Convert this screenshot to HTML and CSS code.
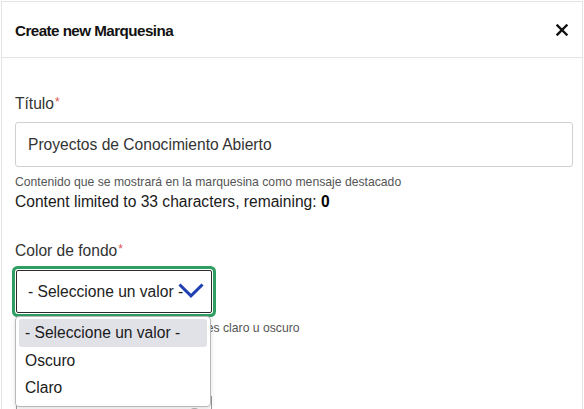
FILE: index.html
```html
<!DOCTYPE html>
<html lang="es">
<head>
<meta charset="utf-8">
<title>Create new Marquesina</title>
<link rel="stylesheet" href="styles.css">
</head>
<body>
<div class="modal">
  <header class="modal-header">
    <h2 class="modal-title">Create new Marquesina</h2>
    <button class="close" type="button" aria-label="Close">
      <svg width="12" height="12" viewBox="0 0 12 12"><path d="M1.5 1.5 L10.5 10.5 M10.5 1.5 L1.5 10.5" stroke="#111" stroke-width="2.4" stroke-linecap="square" fill="none"/></svg>
    </button>
  </header>
  <div class="modal-body">
    <div class="field">
      <label class="label">Título<span class="req">*</span></label>
      <div class="input">Proyectos de Conocimiento Abierto</div>
      <div class="help">Contenido que se mostrará en la marquesina como mensaje destacado</div>
      <div class="counter">Content limited to 33 characters, remaining: <b>0</b></div>
    </div>
    <div class="field field-gap">
      <label class="label">Color de fondo<span class="req">*</span></label>
      <div class="select-wrap">
        <div class="select focused">
          <span class="select-text">- Seleccione un valor -</span>
          <svg class="chev" width="26" height="15" viewBox="0 0 26 15"><polyline points="1.5,1.5 13,12.8 24.5,1.5" stroke="#1f3fb4" stroke-width="3" fill="none" stroke-linejoin="miter"/></svg>
        </div>
        <ul class="dropdown">
          <li class="opt active">- Seleccione un valor -</li>
          <li class="opt">Oscuro</li>
          <li class="opt">Claro</li>
        </ul>
      </div>
      <div class="help">Indique si el color de fondo elegido es claro u oscuro</div>
    </div>
    <div class="field field-gap2">
      <label class="label">Color de texto<span class="req">*</span></label>
      <div class="select">
        <span class="select-text">- Seleccione un valor -</span>
        <span class="knob"></span>
      </div>
    </div>
  </div>
</div>
</body>
</html>
```
FILE: styles.css
```css
* { box-sizing: border-box; }
html, body { margin: 0; padding: 0; background: #fff; }
body { font-family: "Liberation Sans", Arial, sans-serif; }

.modal {
  margin: 1px 0 0 1px;
  width: 582px;
  height: 408px;
  border: 1px solid #e4e4e4;
  border-bottom: none;
  overflow: hidden;
  background: #fff;
}

.modal-header {
  height: 56px;
  border-bottom: 1px solid #e4e4e4;
  display: flex;
  align-items: center;
  justify-content: space-between;
  padding: 0 13px 0 13px;
}
.modal-title {
  margin: 0;
  font-size: 15.2px;
  font-weight: bold;
  letter-spacing: -0.55px;
  color: #111;
  line-height: 20px;
  position: relative;
  top: 1px;
}
.close {
  border: none;
  background: none;
  padding: 0;
  width: 12px;
  height: 12px;
  display: flex;
  margin-right: 1px;
}

.modal-body {
  padding: 36px 9px 0 13px;
}

.label {
  display: block;
  font-size: 15.6px;
  line-height: 19px;
  color: #333;
  margin-bottom: 9px;
}
.req { color: #d9534f; font-size: 12px; vertical-align: top; margin-left: 1px; position: relative; top: -1px; }

.input {
  height: 45px;
  border: 1px solid #d0d0d0;
  border-radius: 3px;
  padding: 0 12px;
  display: flex;
  align-items: center;
  font-size: 15.6px;
  color: #333;
}
.help {
  margin-top: 7px;
  font-size: 12.2px;
  line-height: 16px;
  color: #555;
}
.counter {
  margin-top: 3px;
  font-size: 15.6px;
  line-height: 18px;
  color: #1a1a1a;
}
.counter b { color: #000; }

.field-gap { margin-top: 30px; }
.field-gap .label { margin-bottom: 10px; }
.field-gap2 { margin-top: 30px; }
.field-gap2 .label { margin-bottom: 10px; }

.select-wrap {
  position: relative;
  width: 196px;
  margin-left: 1px;
}
.select {
  position: relative;
  width: 196px;
  height: 43px;
  border: 1px solid #2b2b2b;
  border-radius: 2px;
  padding: 0 11px;
  display: flex;
  align-items: center;
  font-size: 15.6px;
  color: #222;
  background: #fff;
  white-space: nowrap;
}
.field-gap2 .select { margin-left: 1px; border-color: #999; }
.select.focused {
  box-shadow: 0 0 0 1px #fff, 0 0 0 4px #2f9e62;
}
.chev {
  position: absolute;
  right: 7px;
  top: 12px;
}
.knob {
  position: absolute;
  left: 173px;
  top: 12px;
  width: 9px;
  height: 14px;
  border-radius: 4px;
  background: #b9b9b9;
}

.dropdown {
  position: absolute;
  z-index: 5;
  left: -1px;
  top: 46px;
  width: 196px;
  margin: 0;
  list-style: none;
  padding: 2px 3px 5px 3px;
  background: #fff;
  border: 1px solid #b8b8b8;
  border-radius: 4px;
  box-shadow: 0 2px 5px rgba(0,0,0,0.12);
}
.opt {
  height: 27px;
  line-height: 27px;
  padding-left: 6px;
  font-size: 15.6px;
  color: #1a1a1a;
  white-space: nowrap;
}
.opt.active {
  height: 28px;
  line-height: 28px;
  background: #e1e1e8;
  border-radius: 3px;
}
```
